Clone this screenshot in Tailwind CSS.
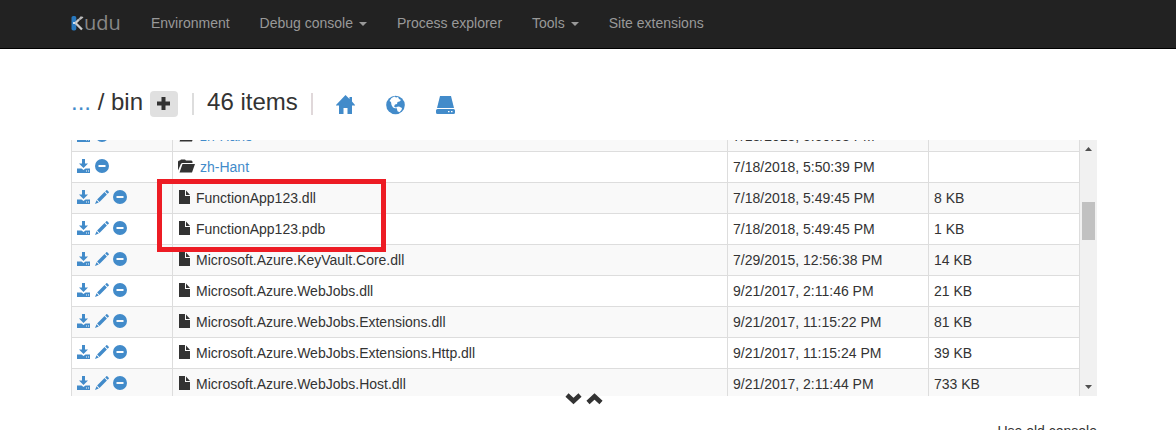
<!DOCTYPE html>
<html lang="en">
<head>
    <meta charset="UTF-8">
    <meta name="viewport" content="width=device-width, initial-scale=1.0">
    <title>Kudu - Debug Console</title>
    <script src="https://cdn.jsdelivr.net/npm/@tailwindcss/browser@4"></script>
</head>
<body class="relative h-[430px] overflow-hidden bg-white font-['Liberation_Sans',Arial,sans-serif] text-sm text-[#333]">

<!-- Icon set -->
<svg class="hidden">
    <symbol id="download" viewBox="0 0 14 14"><path d="M5 0h3v4.500h3L6.500 9 2 4.500h3zM0 9.500h4.500L6.500 11l2-1.500H13V14H0zM9 11.500v1h1v-1zM11 11.500v1h1v-1z" fill="currentColor" fill-rule="evenodd"/></symbol>
    <symbol id="pencil" viewBox="0 0 14 14"><path d="M11.300.3q.5-.4 1 0l1.400 1.400q.5.500 0 1L12.600 3.800 10.200 1.400zM9.500 2.100l2.400 2.400-7.400 7.400-2.400-2.400zM1.500 10.200l2.300 2.300L0 14z" fill="currentColor"/></symbol>
    <symbol id="minus" viewBox="0 0 14 14"><path d="M7 0a7 7 0 1 0 0 14A7 7 0 0 0 7 0zM3.500 6h7v2h-7z" fill="currentColor" fill-rule="evenodd"/></symbol>
    <symbol id="file" viewBox="0 0 14 14"><path d="M1 0h6v6h5v8H1zM8 0.500L12 5H8z" fill="currentColor"/></symbol>
    <symbol id="folder" viewBox="0 0 18 14"><path d="M0 11.500V2.500L1 1.500h1L3 .5h4l1 1h5.500l1 1V4H4.200L3 4.800zM4.500 5H17l-3 8.500H1.500z" fill="currentColor"/></symbol>
</svg>

<!-- Navbar -->
<nav class="flex h-[49px] items-start border-b border-black bg-[#222] pl-[71px] text-[#999]">
    <a class="flex h-[46px] w-[65px] items-center font-['Open_Sans',sans-serif] text-xl leading-none text-[#888]">
        <svg class="h-4 w-[13px] shrink-0" viewBox="0 0 13 16">
            <rect x="0.500" y="1" width="4.800" height="14.500" rx="1.800" fill="#2878be"/>
            <path d="M4.500 8L8 4.500M4.500 8l6.500 6.500" fill="none" stroke="#ccc" stroke-width="2.300"/>
            <path d="M7.500 5l3-3.500M9 4.500L12 2" fill="none" stroke="#bbb" stroke-width="1.300"/>
            <circle cx="3" cy="8" r="1" fill="#fff"/>
        </svg>
        <span>udu</span>
    </a>
    <a class="px-[15px] py-[13px] leading-5">Environment</a>
    <a class="flex items-center px-[15px] py-[13px] leading-5">Debug console<span class="ml-1.5 mt-0.5 border-x-4 border-t-4 border-x-transparent border-t-[#999]"></span></a>
    <a class="px-[15px] py-[13px] leading-5">Process explorer</a>
    <a class="flex items-center px-[15px] py-[13px] leading-5">Tools<span class="ml-1.5 mt-0.5 border-x-4 border-t-4 border-x-transparent border-t-[#999]"></span></a>
    <a class="px-[15px] py-[13px] leading-5">Site extensions</a>
</nav>

<!-- Breadcrumb -->
<div class="ml-[71px] mt-[38px] flex h-[34px] items-start text-2xl leading-[30px]">
    <span class="whitespace-pre"><span class="text-[#428bca]">...</span> / bin</span>
    <span class="ml-[7px] mt-1 flex h-[26px] w-7 items-start justify-center rounded bg-[#e0e0e0] pr-px pt-1.5">
        <svg class="size-[13px]" viewBox="0 0 13 13"><path d="M4.500 0h4v4.500H13v4H8.500V13h-4V8.500H0v-4h4.500z" fill="#333"/></svg>
    </span>
    <span class="ml-[14px] mt-1.5 h-[22px] w-0.5 bg-[#ddd]"></span>
    <span class="ml-[13px]">46 items</span>
    <span class="ml-[13px] mt-1.5 h-[22px] w-0.5 bg-[#e0d8da]"></span>
    <span class="ml-[23px] mt-2 flex gap-[31px] text-[#428bca]">
        <svg class="h-5 w-[19px]" viewBox="0 0 19 20"><path d="M9.500 0l4 4V2H16v4.500l3 3.500v.5h-3V19h-4.500v-6h-4v6H3v-8.500H0V10z" fill="currentColor"/></svg>
        <svg class="size-5" viewBox="0 0 20 20">
            <circle cx="9.500" cy="10" r="9.300" fill="currentColor"/>
            <path d="M5.500 3l3-1.500 1.500 1 2-.5 1 2 2 1-1.500 1.500-2 .5-.5 2-2 .5-1 2 2 1-.5 1-2.500-1-1.500-2.500-.5-3-1.500-1zM10 12l3-.5 3 1.500-.5 2-2 2.200-2-1-.5-2z" fill="#fff"/>
        </svg>
        <svg class="-ml-px h-5 w-[19px]" viewBox="0 0 19 20"><path d="M4 1h11l3 12H1zM1.500 14h16q1.500 0 1.500 1.500v2q0 1.500-1.500 1.500h-16Q0 19 0 17.500v-2Q0 14 1.500 14zM12 16v1.300h1.500V16zM15 16v1.300h1.500V16z" fill="currentColor" fill-rule="evenodd"/></svg>
    </span>
</div>

<!-- File list -->
<div class="relative ml-[71px] mt-[19px] flex h-64 w-[1026px]">
    <div class="h-64 w-[1009px] overflow-hidden border-x border-[#ddd]">
        <div id="files" class="-mt-5"></div>
    </div>
    <div class="flex w-[17px] flex-col items-center bg-[#f1f1f1]">
        <svg class="mt-[7px] h-1 w-[7px]" viewBox="0 0 7 4"><path d="M3.500 0L7 4H0z" fill="#505050"/></svg>
        <div class="mt-[51px] h-[38px] w-[13px] bg-[#c1c1c1]"></div>
        <svg class="mb-[7px] mt-auto h-1 w-[7px]" viewBox="0 0 7 4"><path d="M0 0h7L3.500 4z" fill="#505050"/></svg>
    </div>
    <!-- Highlight -->
    <div class="absolute left-[86px] top-[39px] h-[73px] w-[229px] border-5 border-[#ed1c24]"></div>
    <!-- Resize arrows -->
    <svg class="absolute left-[494px] top-[253px] h-3 w-[39px]" viewBox="0 0 39 12"><path d="M2 2l6.500 6L15 2M23 9.500l6.500-6 6.500 6" fill="none" stroke="#333" stroke-width="4.600"/></svg>
</div>

<div class="ml-[71px] mt-[25px] w-[1026px] text-right leading-5">Use old console</div>

<script>
const files = [
    ['zh-Hans', '7/18/2018, 5:50:38 PM', ''],
    ['zh-Hant', '7/18/2018, 5:50:39 PM', ''],
    ['FunctionApp123.dll', '7/18/2018, 5:49:45 PM', '8 KB'],
    ['FunctionApp123.pdb', '7/18/2018, 5:49:45 PM', '1 KB'],
    ['Microsoft.Azure.KeyVault.Core.dll', '7/29/2015, 12:56:38 PM', '14 KB'],
    ['Microsoft.Azure.WebJobs.dll', '9/21/2017, 2:11:46 PM', '21 KB'],
    ['Microsoft.Azure.WebJobs.Extensions.dll', '9/21/2017, 11:15:22 PM', '81 KB'],
    ['Microsoft.Azure.WebJobs.Extensions.Http.dll', '9/21/2017, 11:15:24 PM', '39 KB'],
    ['Microsoft.Azure.WebJobs.Host.dll', '9/21/2017, 2:11:44 PM', '733 KB']
];

const icon = name => `<svg class="mt-[-2px] size-3.5"><use href="#${name}"/></svg>`;

document.getElementById('files').innerHTML = files.map(([name, modified, size]) => {
    const isFolder = size === '';
    return `
    <div class="grid h-[31px] grid-cols-[101px_555px_201px_1fr] border-t border-[#ddd] leading-5 odd:bg-[#f9f9f9]">
        <div class="flex items-center gap-1 border-r border-[#ddd] pl-[5px] text-[#428bca]">
            ${icon('download')}${isFolder ? '' : icon('pencil')}${icon('minus')}
        </div>
        <div class="flex items-center gap-1 border-r border-[#ddd] pl-[5px]">
            ${isFolder
                ? `<svg class="mt-[-2px] h-3.5 w-[18px]"><use href="#folder"/></svg><a class="text-[#428bca]">${name}</a>`
                : `${icon('file')}<span>${name}</span>`}
        </div>
        <div class="border-r border-[#ddd] py-[5px] pl-[5px]">${modified}</div>
        <div class="py-[5px] pl-[5px]">${size}</div>
    </div>`;
}).join('');
</script>

</body>
</html>
